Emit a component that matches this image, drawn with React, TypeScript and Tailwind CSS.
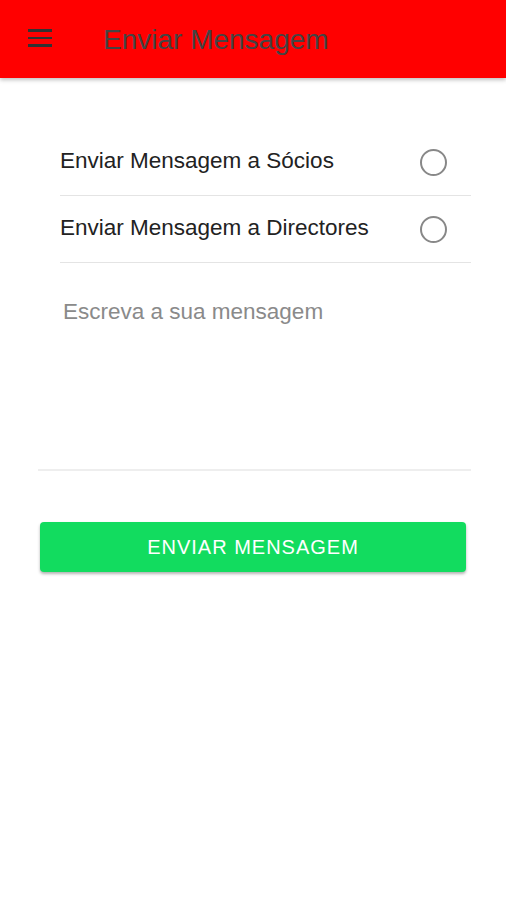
import React from 'react';

function RadioRow({ label }: { label: string }) {
  return (
    <div className="flex items-center justify-between h-[67px] border-b border-[#e4e4e4]">
      <span className="text-[22.5px] text-[#222] mt-[-3px]">{label}</span>
      <span className="w-[27px] h-[27px] rounded-full border-2 border-[#888] mr-[24px]" />
    </div>
  );
}

export default function App() {
  return (
    <div className="w-[506px] h-[900px] bg-white flex flex-col" style={{ fontFamily: '"Liberation Sans", Arial, sans-serif' }}>
      <div className="h-[78px] bg-[#ff0000] flex items-center shadow-[0_2px_4px_rgba(0,0,0,0.25)] relative z-10">
        <div className="ml-[28px] w-[24px] flex flex-col gap-[5px] mt-[-2px]">
          <span className="block h-[2.5px] bg-[#333]" />
          <span className="block h-[2.5px] bg-[#333]" />
          <span className="block h-[2.5px] bg-[#333]" />
        </div>
        <h1 className="ml-[51px] text-[28px] text-[#444] mt-[2px]">Enviar Mensagem</h1>
      </div>

      <div className="pt-[51px]">
        <div className="ml-[60px] mr-[35px]">
          <RadioRow label="Enviar Mensagem a Sócios" />
          <RadioRow label="Enviar Mensagem a Directores" />
        </div>

        <div className="ml-[38px] mr-[35px] h-[208px] border-b-2 border-[#eee] pt-[32px] pl-[25px]">
          <span className="text-[22.5px] text-[#8a8a8a]">Escreva a sua mensagem</span>
        </div>

        <div className="mx-[40px] mt-[51px]">
          <button className="w-full h-[50px] rounded-[4px] bg-[#12dc5f] text-white text-[20px] tracking-[1px] shadow-[0_2px_3px_rgba(0,0,0,0.3)]">
            ENVIAR MENSAGEM
          </button>
        </div>
      </div>
    </div>
  );
}
